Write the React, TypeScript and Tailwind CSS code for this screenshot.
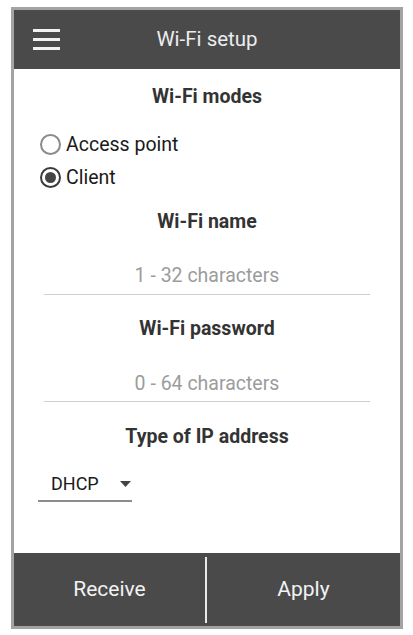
import React from "react";

const Radio = ({ checked, label }: { checked?: boolean; label: string }) => (
  <div className="flex h-[33px] items-center pl-[26px]">
    {checked ? (
      <div className="flex h-[21px] w-[21px] items-center justify-center rounded-full border-[2.5px] border-[#3a3a3a]">
        <div className="h-[11px] w-[11px] rounded-full bg-[#444]" />
      </div>
    ) : (
      <div className="h-[21px] w-[21px] rounded-full border-[2px] border-[#8a8a8a]" />
    )}
    <span className="ml-[5px] text-[19.5px] text-[#1a1a1a]">{label}</span>
  </div>
);

const Heading = ({ children, className = "" }: { children: React.ReactNode; className?: string }) => (
  <div className={`h-[24px] text-center text-[19.5px] leading-[24px] font-bold text-[#333] ${className}`}>{children}</div>
);

const App = () => {
  return (
    <div className="h-[635px] w-[413px] bg-white pl-[11px] pt-[7px]" style={{ fontFamily: "Roboto, 'Liberation Sans', sans-serif" }}>
      <div className="flex h-[622px] w-[392px] flex-col border-[3px] border-[#a3a3a3]">
        <header className="relative flex h-[59px] items-center justify-center bg-[#4a4a4b]">
          <div className="absolute left-[19px] top-[19px] flex flex-col gap-[6px]">
            <div className="h-[3px] w-[27px] bg-[#f2f2f2]" />
            <div className="h-[3px] w-[27px] bg-[#f2f2f2]" />
            <div className="h-[3px] w-[27px] bg-[#f2f2f2]" />
          </div>
          <span className="text-[20.5px] text-[#ededed]">Wi-Fi setup</span>
        </header>

        <main className="flex flex-1 flex-col bg-white pt-[16px]">
          <Heading>Wi-Fi modes</Heading>
          <div className="mt-[19px]">
            <Radio label="Access point" />
            <Radio checked label="Client" />
          </div>

          <Heading className="mt-[16px]">Wi-Fi name</Heading>
          <div className="mx-[30px] mt-[30px] border-b border-[#cfcfcf] pb-[6px] text-center text-[19.5px] leading-[24px] text-[#9c9c9c]">
            1 - 32 characters
          </div>

          <Heading className="mt-[22px]">Wi-Fi password</Heading>
          <div className="mx-[30px] mt-[31px] border-b border-[#cfcfcf] pb-[5px] text-center text-[19.5px] leading-[24px] text-[#9c9c9c]">
            0 - 64 characters
          </div>

          <Heading className="mt-[23px]">Type of IP address</Heading>
          <div className="ml-[24px] mt-[23px] flex w-[94px] items-center border-b-2 border-[#8c8c8c] pb-[4px] pl-[13px]">
            <span className="text-[18px] leading-[24px] text-[#1a1a1a]">DHCP</span>
            <svg className="ml-auto mr-[1px]" width="11" height="6" viewBox="0 0 11 6">
              <path d="M0 0 L11 0 L5.5 6 Z" fill="#444" />
            </svg>
          </div>
        </main>

        <footer className="flex h-[73px] items-center bg-[#4a4a4b]">
          <div className="flex w-[191px] items-center justify-center text-[21px] text-[#f2f2f2]">Receive</div>
          <div className="h-[66px] w-[2px] bg-[#e8e8e8]" />
          <div className="flex flex-1 items-center justify-center text-[21px] text-[#f2f2f2]">Apply</div>
        </footer>
      </div>
    </div>
  );
};

export default App;
